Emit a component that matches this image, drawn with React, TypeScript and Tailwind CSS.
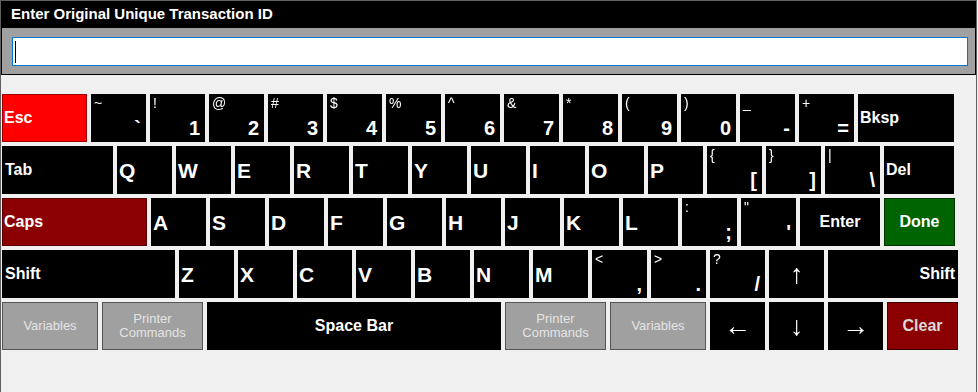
import React from 'react';

type Pair = [string, string];

function LetterKey({ ch }: { ch: string }) {
  return (
    <div className="w-[55px] h-[48px] shrink-0 bg-black text-white flex items-center pl-[2px] text-[21px] font-bold leading-none">
      {ch}
    </div>
  );
}

function PairKey({ p }: { p: Pair }) {
  return (
    <div className="relative w-[55px] h-[48px] shrink-0 bg-black text-white">
      <span className="absolute left-[3px] top-[1px] text-[14px] leading-[16px] font-normal will-change-transform">{p[0]}</span>
      <span className="absolute right-[5px] bottom-[4px] text-[20px] leading-[20px] font-bold">{p[1]}</span>
    </div>
  );
}

function ArrowKey({ ch }: { ch: string }) {
  return (
    <div className="w-[55px] h-[48px] shrink-0 bg-black text-white flex items-center justify-center">
      <span className="text-[27px] leading-none font-normal will-change-transform">{ch}</span>
    </div>
  );
}

function GrayKey({ w, lines }: { w: string; lines: string[] }) {
  return (
    <div
      className={`${w} h-[48px] shrink-0 bg-[#a0a0a0] border border-[#555555] text-[#e4e4e4] flex flex-col items-center justify-center text-[13px] leading-[14px] font-normal`}
    >
      {lines.map((l) => (
        <span key={l}>{l}</span>
      ))}
    </div>
  );
}

const row1: Pair[] = [
  ['~', '`'], ['!', '1'], ['@', '2'], ['#', '3'], ['$', '4'], ['%', '5'], ['^', '6'],
  ['&', '7'], ['*', '8'], ['(', '9'], [')', '0'], ['_', '-'], ['+', '='],
];

export default function App() {
  return (
    <div className="w-[978px] h-[392px] bg-[#f0f0f0] font-['Liberation_Sans',Arial,sans-serif] overflow-hidden">
      <div className="w-[977px] h-[392px] border-l border-r border-t border-[#5f5f5f] flex flex-col">
        {/* header */}
        <div className="bg-black px-[1px] pb-[1px]">
          <div className="h-[27px] flex items-center pl-[9px] text-white text-[15px] font-bold">
            Enter Original Unique Transaction ID
          </div>
          <div className="h-[46px] bg-[#a0a0a0] pl-[10px] pt-[9px]">
            <div className="w-[956px] h-[29px] bg-white border border-[#0078d7] flex items-center">
              <span className="ml-[2px] w-[1px] h-[22px] bg-black" />
            </div>
          </div>
        </div>

        {/* keyboard */}
        <div className="flex flex-col gap-[4px] pt-[19px] pl-[1px]">
          {/* row 1 */}
          <div className="flex gap-[4px]">
            <div className="w-[85px] h-[48px] shrink-0 bg-[#ff0000] border border-[#9a0000] text-white flex items-center pl-[1px] text-[16px] font-bold">
              Esc
            </div>
            {row1.map((p) => (
              <PairKey key={p[1]} p={p} />
            ))}
            <div className="w-[96px] h-[48px] shrink-0 bg-black text-white flex items-center pl-[2px] text-[16px] font-bold">
              Bksp
            </div>
          </div>

          {/* row 2 */}
          <div className="flex gap-[4px]">
            <div className="w-[111px] h-[48px] shrink-0 bg-black text-white flex items-center pl-[3px] text-[16px] font-bold">
              Tab
            </div>
            {['Q', 'W', 'E', 'R', 'T', 'Y', 'U', 'I', 'O', 'P'].map((c) => (
              <LetterKey key={c} ch={c} />
            ))}
            <PairKey p={['{', '[']} />
            <PairKey p={['}', ']']} />
            <PairKey p={['|', '\\']} />
            <div className="w-[70px] h-[48px] shrink-0 bg-black text-white flex items-center pl-[2px] text-[16px] font-bold">
              Del
            </div>
          </div>

          {/* row 3 */}
          <div className="flex gap-[4px]">
            <div className="w-[145px] h-[48px] shrink-0 bg-[#8b0000] border border-[#5a0000] text-white flex items-center pl-[1px] text-[16px] font-bold">
              Caps
            </div>
            {['A', 'S', 'D', 'F', 'G', 'H', 'J', 'K', 'L'].map((c) => (
              <LetterKey key={c} ch={c} />
            ))}
            <PairKey p={[':', ';']} />
            <PairKey p={['"', "'"]} />
            <div className="w-[80px] h-[48px] shrink-0 bg-black text-white flex items-center justify-center text-[16px] font-bold">
              Enter
            </div>
            <div className="w-[71px] h-[48px] shrink-0 bg-[#006400] border border-[#003300] text-white flex items-center justify-center text-[16px] font-bold">
              Done
            </div>
          </div>

          {/* row 4 */}
          <div className="flex gap-[4px]">
            <div className="w-[173px] h-[48px] shrink-0 bg-black text-white flex items-center pl-[3px] text-[16px] font-bold">
              Shift
            </div>
            {['Z', 'X', 'C', 'V', 'B', 'N', 'M'].map((c) => (
              <LetterKey key={c} ch={c} />
            ))}
            <PairKey p={['<', ',']} />
            <PairKey p={['>', '.']} />
            <PairKey p={['?', '/']} />
            <ArrowKey ch="↑" />
            <div className="w-[130px] h-[48px] shrink-0 bg-black text-white flex items-center justify-end pr-[3px] text-[16px] font-bold">
              Shift
            </div>
          </div>

          {/* row 5 */}
          <div className="flex gap-[4px]">
            <GrayKey w="w-[96px]" lines={['Variables']} />
            <GrayKey w="w-[101px]" lines={['Printer', 'Commands']} />
            <div className="w-[294px] h-[48px] shrink-0 bg-black text-white flex items-center justify-center text-[16px] font-bold">
              Space Bar
            </div>
            <GrayKey w="w-[101px]" lines={['Printer', 'Commands']} />
            <GrayKey w="w-[96px]" lines={['Variables']} />
            <ArrowKey ch="←" />
            <ArrowKey ch="↓" />
            <ArrowKey ch="→" />
            <div className="w-[71px] h-[48px] shrink-0 bg-[#8b0000] border border-[#3f0000] text-[#dadada] flex items-center justify-center text-[16px] font-bold">
              Clear
            </div>
          </div>
        </div>
      </div>
    </div>
  );
}
